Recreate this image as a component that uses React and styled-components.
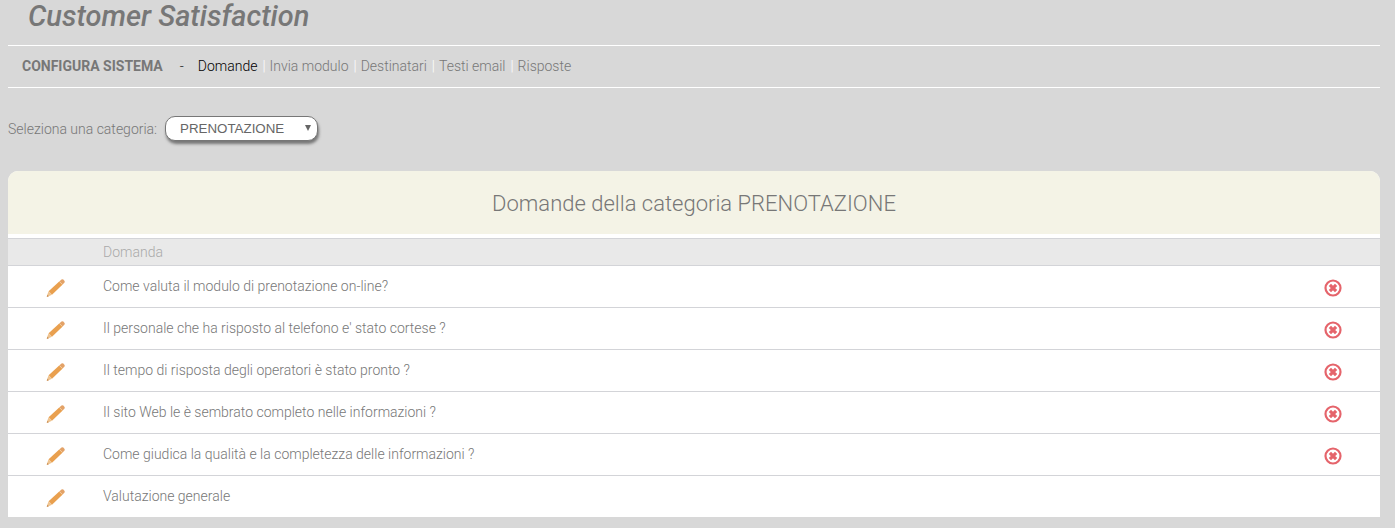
import React, { useState } from 'react'
import styled, { createGlobalStyle } from 'styled-components'

const GlobalStyle = createGlobalStyle`
  * {
    box-sizing: border-box;
  }
  body {
    margin: 0;
    background-color: #d8d8d8;
    color: #777;
    font-family: Roboto, "Liberation Sans", sans-serif;
    font-size: 14px;
    font-weight: 300;
    line-height: 20px;
  }
`
const Page = styled.main`
  padding: 0 15px 11px 8px;
`
const Title = styled.h1`
  margin: 0;
  padding: 0 20px 13px;
  font-size: 29px;
  font-style: italic;
  font-weight: 500;
  line-height: 32px;
`
const Nav = styled.nav`
  display: flex;
  align-items: center;
  height: 43px;
  padding: 0 14px 2px;
  border-top: 1px solid #fff;
  border-bottom: 1px solid #fff;
`
const NavTitle = styled.strong`
  font-weight: 700;
`
const Dash = styled.span`
  margin: 0 14px 0 17px;
  color: #222;
`
const NavList = styled.ul`
  display: flex;
  margin: 0;
  padding: 0;
  list-style: none;
`
const NavItem = styled.li`
  & + &::before {
    content: "|";
    margin: 0 4px 0 5px;
    color: #fff;
  }
`
const NavLink = styled.a`
  color: ${({ $active }) => ($active ? '#000' : '#777')};
  text-decoration: none;
`
const Filter = styled.div`
  display: flex;
  align-items: center;
  gap: 8px;
  padding: 28px 0 30px;
`
const SelectBox = styled.div`
  position: relative;
  &::after {
    content: "";
    position: absolute;
    top: 9px;
    right: 7px;
    border: 3px solid transparent;
    border-top: 6px solid #666;
    border-bottom: 0;
    pointer-events: none;
  }
`
const Select = styled.select`
  display: block;
  width: 153px;
  height: 25px;
  padding: 0 14px;
  appearance: none;
  border: 1px solid #777;
  border-radius: 10px;
  outline: none;
  background-color: #fff;
  box-shadow: 1px 3px 3px #777;
  color: #666;
  font-family: "Liberation Sans", Arial, sans-serif;
`
const Panel = styled.section`
  overflow: hidden;
  border-radius: 10px 10px 0 0;
  background-color: #fff;
`
const PanelTitle = styled.h2`
  margin: 0 0 4px;
  padding: 19px 0 16px;
  background-color: #f4f3e6;
  font-size: 22px;
  font-weight: 300;
  line-height: 28px;
  text-align: center;
`
const Table = styled.table`
  width: 100%;
  border-collapse: separate;
  border-spacing: 0;
  table-layout: fixed;
`
const Th = styled.th`
  width: ${({ $icon }) => ($icon ? '95px' : 'auto')};
  height: 28px;
  padding: 0;
  border-top: 1px solid #d3d4d8;
  border-bottom: 1px solid #d3d4d8;
  background-color: #e9e9e9;
  color: #aaa;
  font-weight: 300;
  text-align: left;
`
const Td = styled.td`
  height: 42px;
  padding: 0 0 2px;
  border-bottom: 1px solid #d3d4d8;
  tr:last-child > & {
    height: 41px;
    border-bottom: 0;
  }
`
const IconButton = styled.button`
  display: flex;
  margin: 5px auto 0;
  padding: 0;
  border: none;
  background: none;
  cursor: pointer;
`

const links = ['Domande', 'Invia modulo', 'Destinatari', 'Testi email', 'Risposte']

const questions = [
  { text: 'Come valuta il modulo di prenotazione on-line?', removable: true },
  { text: "Il personale che ha risposto al telefono e' stato cortese ?", removable: true },
  { text: 'Il tempo di risposta degli operatori è stato pronto ?', removable: true },
  { text: 'Il sito Web le è sembrato completo nelle informazioni ?', removable: true },
  { text: 'Come giudica la qualità e la completezza delle informazioni ?', removable: true },
  { text: 'Valutazione generale', removable: false },
]

function PencilIcon() {
  return (
    <svg width="20" height="20" viewBox="0 0 20 20" aria-hidden="true">
      <path d="M2.6 13.2 L13.2 3.6 L16.4 6.8 L6 16.8 Z" fill="#e9a04f" />
      <path d="M13.2 3.6 L15.5 1.4 Q16.4 .8 17.3 1.6 L18.4 2.7 Q19.2 3.6 18.5 4.6 L16.4 6.8 Z" fill="#e3a267" />
      <path d="M13.4 3.4 L16.6 6.6" stroke="#f3cfa4" strokeWidth=".8" />
      <path d="M2.6 13.2 L6 16.8 L2 18.6 L.8 18.8 L1 17.5 Z" fill="#eec38f" />
      <path d="M1.3 16.7 L2.9 18.2 L.8 18.9 Z" fill="#c98f55" />
    </svg>
  )
}

function RemoveIcon() {
  return (
    <svg width="20" height="20" viewBox="0 0 20 20" aria-hidden="true">
      <circle cx="10" cy="10" r="7.5" fill="none" stroke="#e5646b" strokeWidth="2.2" />
      <path d="M6.9 6.9 L13.1 13.1 M13.1 6.9 L6.9 13.1" stroke="#e5646b" strokeWidth="3.2" />
    </svg>
  )
}

function App() {
  const [category, setCategory] = useState('PRENOTAZIONE')

  return (
    <>
      <GlobalStyle />
      <Page>
        <Title>Customer Satisfaction</Title>
        <Nav>
          <NavTitle>CONFIGURA SISTEMA</NavTitle>
          <Dash>-</Dash>
          <NavList>
            {links.map((link, i) => (
              <NavItem key={link}>
                <NavLink href="#" $active={i === 0}>{link}</NavLink>
              </NavItem>
            ))}
          </NavList>
        </Nav>
        <Filter>
          <label htmlFor="category">Seleziona una categoria:</label>
          <SelectBox>
            <Select id="category" value={category} onChange={(e) => setCategory(e.target.value)}>
              <option>PRENOTAZIONE</option>
            </Select>
          </SelectBox>
        </Filter>
        <Panel>
          <PanelTitle>Domande della categoria {category}</PanelTitle>
          <Table>
            <thead>
              <tr>
                <Th $icon />
                <Th>Domanda</Th>
                <Th $icon />
              </tr>
            </thead>
            <tbody>
              {questions.map(({ text, removable }) => (
                <tr key={text}>
                  <Td>
                    <IconButton aria-label="Modifica"><PencilIcon /></IconButton>
                  </Td>
                  <Td>{text}</Td>
                  <Td>
                    {removable && <IconButton aria-label="Elimina"><RemoveIcon /></IconButton>}
                  </Td>
                </tr>
              ))}
            </tbody>
          </Table>
        </Panel>
      </Page>
    </>
  )
}

export default App
